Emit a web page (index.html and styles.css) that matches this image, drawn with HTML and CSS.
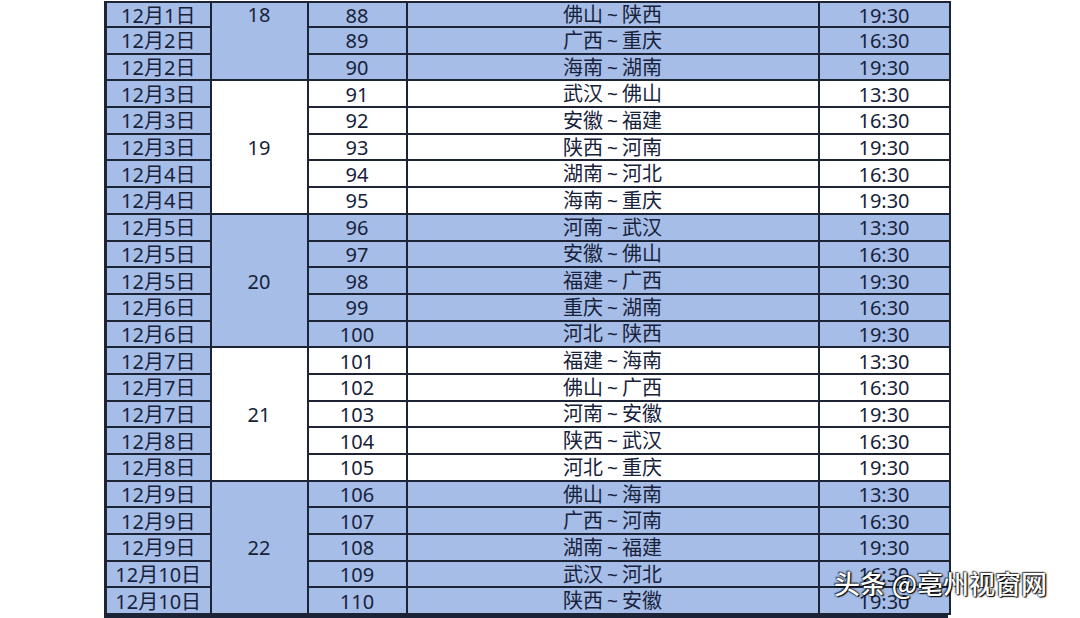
FILE: index.html
```html
<!DOCTYPE html>
<html lang="zh-CN">
<head>
<meta charset="utf-8">
<title>赛程表</title>
<link rel="stylesheet" href="styles.css">
</head>
<body>
<div class="page">
  <div class="sheet">
    <table class="sched">
      <colgroup>
        <col class="c-d"><col class="c-r"><col class="c-n"><col class="c-m"><col class="c-t">
      </colgroup>
      <tbody>
        <tr class="b first"><td class="d">12月1日</td><td class="r top" rowspan="3">18</td><td class="n">88</td><td class="m">佛山<span class="tl">~</span>陕西</td><td class="t">19:30</td></tr>
        <tr class="b"><td class="d">12月2日</td><td class="n">89</td><td class="m">广西<span class="tl">~</span>重庆</td><td class="t">16:30</td></tr>
        <tr class="b"><td class="d">12月2日</td><td class="n">90</td><td class="m">海南<span class="tl">~</span>湖南</td><td class="t">19:30</td></tr>

        <tr class="w"><td class="d">12月3日</td><td class="r" rowspan="5">19</td><td class="n">91</td><td class="m">武汉<span class="tl">~</span>佛山</td><td class="t">13:30</td></tr>
        <tr class="w"><td class="d">12月3日</td><td class="n">92</td><td class="m">安徽<span class="tl">~</span>福建</td><td class="t">16:30</td></tr>
        <tr class="w"><td class="d">12月3日</td><td class="n">93</td><td class="m">陕西<span class="tl">~</span>河南</td><td class="t">19:30</td></tr>
        <tr class="w"><td class="d">12月4日</td><td class="n">94</td><td class="m">湖南<span class="tl">~</span>河北</td><td class="t">16:30</td></tr>
        <tr class="w"><td class="d">12月4日</td><td class="n">95</td><td class="m">海南<span class="tl">~</span>重庆</td><td class="t">19:30</td></tr>

        <tr class="b"><td class="d">12月5日</td><td class="r" rowspan="5">20</td><td class="n">96</td><td class="m">河南<span class="tl">~</span>武汉</td><td class="t">13:30</td></tr>
        <tr class="b"><td class="d">12月5日</td><td class="n">97</td><td class="m">安徽<span class="tl">~</span>佛山</td><td class="t">16:30</td></tr>
        <tr class="b"><td class="d">12月5日</td><td class="n">98</td><td class="m">福建<span class="tl">~</span>广西</td><td class="t">19:30</td></tr>
        <tr class="b"><td class="d">12月6日</td><td class="n">99</td><td class="m">重庆<span class="tl">~</span>湖南</td><td class="t">16:30</td></tr>
        <tr class="b"><td class="d">12月6日</td><td class="n">100</td><td class="m">河北<span class="tl">~</span>陕西</td><td class="t">19:30</td></tr>

        <tr class="w"><td class="d">12月7日</td><td class="r" rowspan="5">21</td><td class="n">101</td><td class="m">福建<span class="tl">~</span>海南</td><td class="t">13:30</td></tr>
        <tr class="w"><td class="d">12月7日</td><td class="n">102</td><td class="m">佛山<span class="tl">~</span>广西</td><td class="t">16:30</td></tr>
        <tr class="w"><td class="d">12月7日</td><td class="n">103</td><td class="m">河南<span class="tl">~</span>安徽</td><td class="t">19:30</td></tr>
        <tr class="w"><td class="d">12月8日</td><td class="n">104</td><td class="m">陕西<span class="tl">~</span>武汉</td><td class="t">16:30</td></tr>
        <tr class="w"><td class="d">12月8日</td><td class="n">105</td><td class="m">河北<span class="tl">~</span>重庆</td><td class="t">19:30</td></tr>

        <tr class="b"><td class="d">12月9日</td><td class="r" rowspan="5">22</td><td class="n">106</td><td class="m">佛山<span class="tl">~</span>海南</td><td class="t">13:30</td></tr>
        <tr class="b"><td class="d">12月9日</td><td class="n">107</td><td class="m">广西<span class="tl">~</span>河南</td><td class="t">16:30</td></tr>
        <tr class="b"><td class="d">12月9日</td><td class="n">108</td><td class="m">湖南<span class="tl">~</span>福建</td><td class="t">19:30</td></tr>
        <tr class="b"><td class="d">12月10日</td><td class="n">109</td><td class="m">武汉<span class="tl">~</span>河北</td><td class="t">16:30</td></tr>
        <tr class="b"><td class="d">12月10日</td><td class="n">110</td><td class="m">陕西<span class="tl">~</span>安徽</td><td class="t">19:30</td></tr>
      </tbody>
    </table>
  </div>
  <div class="watermark">头条 @亳州视窗网</div>
</div>
</body>
</html>
```
FILE: styles.css
```css
html, body {
  margin: 0;
  padding: 0;
  background: #ffffff;
}

.page {
  position: relative;
  width: 1080px;
  height: 618px;
  overflow: hidden;
  font-family: "Noto Sans", "Noto Sans CJK SC", sans-serif;
  color: #17223a;
}

.sheet {
  margin: 1px 0 0 104px;
  width: 844px;
  border-bottom: 7px solid #1a2338;
}

.sched {
  width: 844px;
  table-layout: fixed;
  border-collapse: collapse;
  border-left: 3px solid #1c2436;
  border-right: 2px solid #1c2436;
  border-top: 2px solid #1c2436;
}

.c-d { width: 105px; }
.c-r { width: 97px; }
.c-n { width: 99px; }
.c-m { width: 412px; }
.c-t { width: 131px; }

.sched tr { height: 26.7px; }
.sched tr.first { height: 23.4px; }

.sched td {
  border: 2px solid #1c2436;
  padding: 1px 0 0 0;
  font-size: 20px;
  line-height: 21px;
  text-align: center;
  vertical-align: middle;
  white-space: nowrap;
}

.sched tr.b td { background: #a6bde8; }
.sched tr.w td { background: #ffffff; }
.sched tr td.d { background: #a6bde8; }

.sched td.r.top {
  vertical-align: top;
  padding-top: 1px;
}

.tl {
  display: inline-block;
  margin: 0 4px;
  font-size: 19px;
}

.watermark {
  position: absolute;
  left: 834px;
  top: 566px;
  font-family: "Noto Sans CJK SC", sans-serif;
  font-size: 26px;
  font-weight: 500;
  line-height: 34px;
  color: #ffffff;
  text-shadow: 1px 1px 1px rgba(0,0,0,0.95), 0 0 2px rgba(0,0,0,0.85), -1px -1px 1px rgba(0,0,0,0.6), 1px 0 2px rgba(0,0,0,0.7);
  white-space: nowrap;
}
```
